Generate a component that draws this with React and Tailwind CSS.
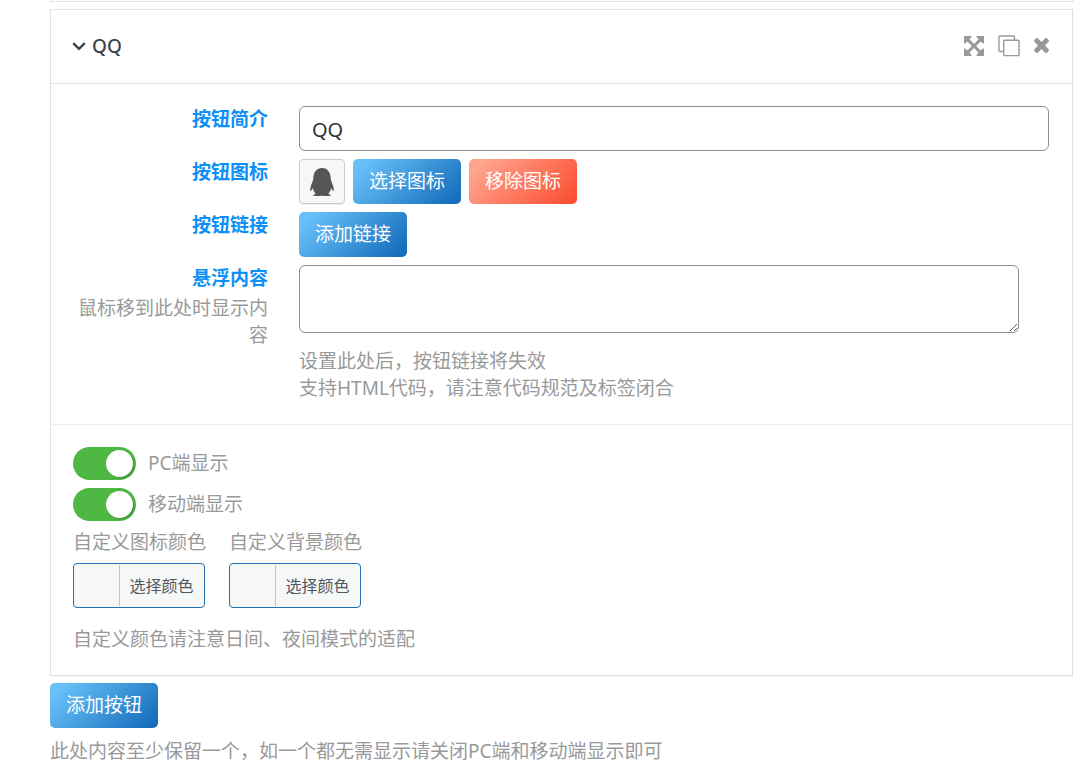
import React, { useState } from 'react';
import { FaQq } from 'react-icons/fa';

const blueButton =
  'h-[45px] px-4 rounded-[5px] text-[19px] leading-[27px] text-white whitespace-nowrap bg-[linear-gradient(135deg,#67c0f8_10%,#1068b8_100%)]';
const redButton =
  'h-[45px] px-4 rounded-[5px] text-[19px] leading-[27px] text-white whitespace-nowrap bg-[linear-gradient(135deg,#ffa58d_10%,#fb4a2e_100%)]';

function ArrowsIcon() {
  return (
    <svg className="size-5" viewBox="128 128 1536 1536" fill="currentColor">
      <path d="M1411 541l-355 355 355 355 144-144q29-31 70-14 39 17 39 59v448q0 26-19 45t-45 19h-448q-42 0-59-40-17-39 14-69l144-144-355-355-355 355 144 144q31 30 14 69-17 40-59 40h-448q-26 0-45-19t-19-45v-448q0-42 40-59 39-17 69 14l144 144 355-355-355-355-144 144q-19 19-45 19-12 0-24-5-40-17-40-59v-448q0-26 19-45t45-19h448q42 0 59 40 17 39-14 69l-144 144 355 355 355-355-144-144q-31-30-14-69 17-40 59-40h448q26 0 45 19t19 45v448q0 42-39 59-13 5-25 5-26 0-45-19z" />
    </svg>
  );
}

function CloneIcon() {
  return (
    <svg className="size-[22px]" viewBox="0 0 22 22" fill="none" stroke="currentColor" strokeWidth="1.4">
      <rect x="5.7" y="5.2" width="15.4" height="15.4" rx="1" />
      <path d="M5 16.5H2a1 1 0 0 1-1-1V2a1 1 0 0 1 1-1h13.500a1 1 0 0 1 1 1v3" />
    </svg>
  );
}

function TimesIcon() {
  return (
    <svg className="size-[15px]" viewBox="302 366 1188 1188" fill="currentColor">
      <path d="M1490 1322q0 40-28 68l-136 136q-28 28-68 28t-68-28l-294-294-294 294q-28 28-68 28t-68-28l-136-136q-28-28-28-68t28-68l294-294-294-294q-28-28-28-68t28-68l136-136q28-28 68-28t68 28l294 294 294-294q28-28 68-28t68 28l136 136q28 28 28 68t-28 68l-294 294 294 294q28 28 28 68z" />
    </svg>
  );
}

function Field({ label, desc, htmlFor, children }) {
  return (
    <div className="grid grid-cols-[195px_minmax(0,1fr)] gap-x-[31px]">
      <div className="text-right">
        <label htmlFor={htmlFor} className="block font-bold text-[#0d8ff8]">
          {label}
        </label>
        {desc && <p className="mt-[3px]">{desc}</p>}
      </div>
      <div>{children}</div>
    </div>
  );
}

function Toggle({ label }) {
  const [on, setOn] = useState(true);

  return (
    <label className="flex items-center gap-3">
      <input
        type="checkbox"
        checked={on}
        onChange={(e) => setOn(e.target.checked)}
        className="appearance-none w-[63px] h-[33px] p-[3px] rounded-full bg-gray-300 checked:bg-[#4fb845] flex justify-start checked:justify-end before:content-[''] before:size-[27px] before:rounded-full before:bg-white before:shadow-[1px_1px_2px_rgba(0,0,0,0.25)]"
      />
      <span>{label}</span>
    </label>
  );
}

function ColorField({ id, label }) {
  return (
    <div className="w-[136px]">
      <label htmlFor={id} className="block whitespace-nowrap">
        {label}
      </label>
      <button
        id={id}
        type="button"
        className="mt-[7px] w-[132px] h-[45px] flex items-stretch p-px border border-[#2271b1] rounded bg-[#f6f7f7] text-base text-[#50575e]"
      >
        <span className="w-[45px] border-r border-[#c3c4c7]"></span>
        <span className="flex-1 flex items-center justify-center whitespace-nowrap">选择颜色</span>
      </button>
    </div>
  );
}

export default function App() {
  const [open, setOpen] = useState(true);
  const [title, setTitle] = useState('QQ');

  return (
    <div className="pl-[50px] pr-[2px] bg-white text-[19px] leading-[27px] text-[#999] font-['Noto_Sans','Noto_Sans_CJK_SC',sans-serif]">
      <div className="h-0.5 border-x border-b border-[#e1e1e1]"></div>

      <section className="mt-[7px] border border-[#e1e1e1] shadow-[0_1px_1px_rgba(0,0,0,0.04)]">
        <header className="h-[73px] pl-[21px] pr-[23px] flex items-center justify-between">
          <button
            type="button"
            onClick={() => setOpen(!open)}
            className="flex items-center gap-[6px] font-medium text-[#3c434a]"
          >
            <svg className="w-[14px] h-[9px]" viewBox="0 0 14 9" fill="none" stroke="currentColor" strokeWidth="2.4">
              <path d="M1.200 1.200L7 6.800L12.800 1.200" />
            </svg>
            {title}
          </button>
          <div className="flex items-center gap-[14px] pb-0.5">
            <button type="button" aria-label="排序"><ArrowsIcon /></button>
            <button type="button" aria-label="复制"><CloneIcon /></button>
            <button type="button" aria-label="删除"><TimesIcon /></button>
          </div>
        </header>

        {open && (
          <>
            <div className="pl-[22px] pr-[23px] py-[22px] border-t border-[#e1e1e1] flex flex-col gap-2">
              <Field label="按钮简介" htmlFor="title">
                <input
                  id="title"
                  type="text"
                  value={title}
                  onChange={(e) => setTitle(e.target.value)}
                  className="block w-full h-[45px] px-3 pt-0.5 border border-[#8c8f94] rounded-md text-xl text-[#2c3338]"
                />
              </Field>
              <Field label="按钮图标">
                <div className="flex gap-2">
                  <span className="w-[46px] h-[45px] flex items-center justify-center border border-[#ccc] rounded bg-[#f7f7f7] text-[#555] shadow-[0_1px_0_rgba(0,0,0,0.06)]">
                    <FaQq className="size-7" />
                  </span>
                  <button type="button" className={blueButton}>选择图标</button>
                  <button type="button" className={redButton}>移除图标</button>
                </div>
              </Field>
              <Field label="按钮链接">
                <button type="button" className={`block ${blueButton}`}>添加链接</button>
              </Field>
              <Field label="悬浮内容" desc="鼠标移到此处时显示内容" htmlFor="hover">
                <textarea
                  id="hover"
                  className="block w-[96%] h-[68px] px-3 py-1 border border-[#8c8f94] rounded-md text-[#2c3338]"
                />
                <p className="mt-[15px]">
                  设置此处后，按钮链接将失效
                  <br />
                  支持HTML代码，请注意代码规范及标签闭合
                </p>
              </Field>
            </div>

            <div className="p-[22px] border-t border-[#eee]">
              <div className="flex flex-col gap-2">
                <Toggle label="PC端显示" />
                <Toggle label="移动端显示" />
              </div>
              <div className="mt-2 flex gap-5">
                <ColorField id="icon-color" label="自定义图标颜色" />
                <ColorField id="bg-color" label="自定义背景颜色" />
              </div>
              <p className="mt-[18px]">自定义颜色请注意日间、夜间模式的适配</p>
            </div>
          </>
        )}
      </section>

      <button type="button" className={`block mt-[7px] ${blueButton}`}>添加按钮</button>
      <p className="mt-[10px]">此处内容至少保留一个，如一个都无需显示请关闭PC端和移动端显示即可</p>
    </div>
  );
}
